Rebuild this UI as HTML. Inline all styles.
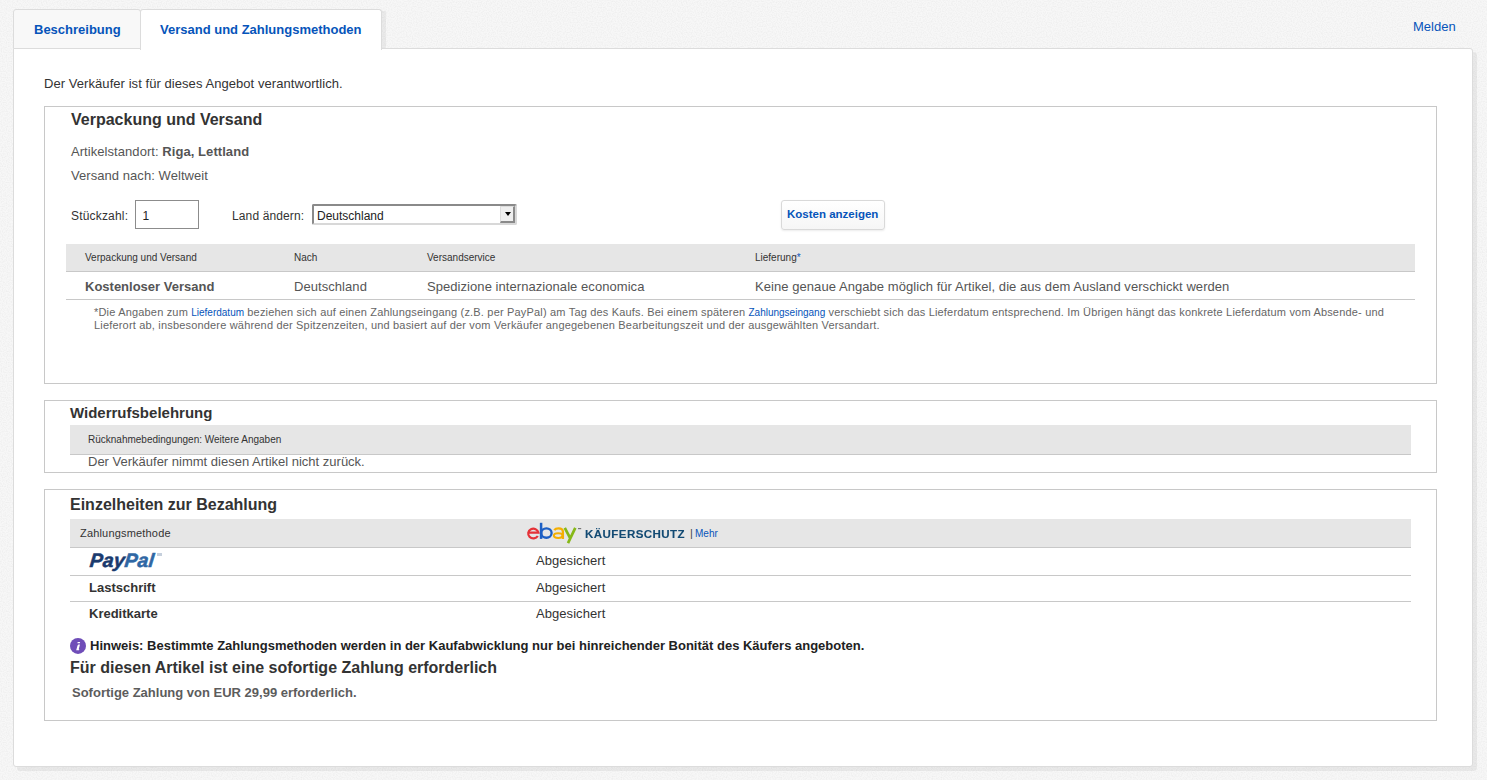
<!DOCTYPE html>
<html><head><meta charset="utf-8">
<style>
*{box-sizing:border-box;margin:0;padding:0}
html,body{width:1487px;height:780px;overflow:hidden}
body{background:#f5f5f5;font-family:"Liberation Sans",sans-serif;color:#333;position:relative}
.abs{position:absolute}
.t{position:absolute;white-space:nowrap;line-height:1}
.tab{position:absolute;top:9px;height:40px;border:1px solid #dcdcdc;border-bottom:none;border-radius:3px 3px 0 0}
.tab1{left:13px;width:128px;background:#f8f8f8;border-bottom:1px solid #dcdcdc;height:40px}
.tab2{left:140px;width:242px;background:#fff;height:41px;z-index:3}
.tablbl{font-weight:bold;font-size:13px;color:#0654ba}
.panel{left:13px;top:48px;width:1460px;height:719px;background:#fff;border:1px solid #dcdcdc;border-radius:0 3px 3px 3px;box-shadow:4px 4px 0 rgba(0,0,0,.055);z-index:2}
.box{position:absolute;left:44px;width:1393px;border:1px solid #c8c8c8;background:#fff;z-index:4}
.h{font-weight:bold;font-size:16px;color:#333}
.s13{font-size:13px;color:#555;letter-spacing:.06px}
.thead{position:absolute;background:#e6e6e6;border-bottom:1px solid #c8c8c8}
.th{font-size:10px;color:#333}
.link{color:#0654ba}
.vd{font-family:"Liberation Sans",sans-serif;font-size:11px;color:#666;letter-spacing:.18px}
.rowline{position:absolute;height:1px;background:#c8c8c8}
</style></head><body>
<svg class="abs" style="left:0;top:0;z-index:0" width="1487" height="780"><filter id="nz" x="0" y="0" width="100%" height="100%"><feTurbulence type="fractalNoise" baseFrequency="0.8" numOctaves="1" seed="3"/><feColorMatrix type="matrix" values="0 0 0 0 0  0 0 0 0 0  0 0 0 0 0  0 0 0 .09 -.035"/></filter><rect width="1487" height="780" fill="#f7f7f7"/><rect width="1487" height="780" filter="url(#nz)"/></svg>
<div class="tab tab1"></div>
<div class="tab tab2"></div>
<div class="abs" style="left:382px;top:11px;width:4px;height:37px;background:rgba(0,0,0,.05);z-index:1"></div>
<div class="t tablbl" style="left:34px;top:23px;z-index:5">Beschreibung</div>
<div class="t tablbl" style="left:160px;top:23px;z-index:5">Versand und Zahlungsmethoden</div>
<div class="t" style="left:1413px;top:20px;font-size:13px;color:#0654ba">Melden</div>
<div class="abs panel"></div>

<div class="t" style="left:44px;top:77px;font-size:13px;color:#333;z-index:5;letter-spacing:.06px">Der Verkäufer ist für dieses Angebot verantwortlich.</div>

<!-- Section 1 -->
<div class="box" style="top:106px;height:278px"></div>
<div style="position:absolute;left:0;top:0;z-index:6">
<div class="t h" style="left:71px;top:112px">Verpackung und Versand</div>
<div class="t s13" style="left:71px;top:145px">Artikelstandort: <b>Riga, Lettland</b></div>
<div class="t s13" style="left:71px;top:169px">Versand nach: Weltweit</div>
<div class="t" style="left:71px;top:210px;font-size:12px;color:#333;letter-spacing:.18px">Stückzahl:</div>
<div class="abs" style="left:135px;top:200px;width:64px;height:29px;border:1px solid #8c8c8c;background:#fff"></div>
<div class="t" style="left:142.5px;top:209.5px;font-size:12px;color:#222">1</div>
<div class="t" style="left:232px;top:210px;font-size:12px;color:#333;letter-spacing:.12px">Land ändern:</div>
<div class="abs" style="left:312px;top:204px;width:205px;height:21px;border-left:2px solid #8a8a8a;border-top:2px solid #8a8a8a;border-right:2px solid #d8d8d8;border-bottom:2px solid #d8d8d8;border-radius:2px;background:#fff"></div>
<div class="t" style="left:317px;top:210px;font-size:12px;color:#222">Deutschland</div>
<div class="abs" style="left:500px;top:206px;width:15px;height:17px;background:#efefef;border-left:1px solid #dcdcdc;border-top:1px solid #dcdcdc;border-right:2px solid #8a8a8a;border-bottom:2px solid #8a8a8a"></div>
<div class="abs" style="left:504.5px;top:212px;width:0;height:0;border-left:3.5px solid transparent;border-right:3.5px solid transparent;border-top:4px solid #000"></div>
<div class="abs" style="left:781px;top:200px;width:104px;height:30px;border:1px solid #d9d9d9;border-radius:3px;background:linear-gradient(#fff,#f6f6f6);box-shadow:0 1px 2px rgba(0,0,0,.08)"></div>
<div class="t" style="left:787px;top:209px;font-size:11.5px;font-weight:bold;color:#0654ba">Kosten anzeigen</div>

<div class="thead" style="left:66px;top:244px;width:1349px;height:28px"></div>
<div class="t th" style="left:85px;top:253px">Verpackung und Versand</div>
<div class="t th" style="left:294px;top:253px">Nach</div>
<div class="t th" style="left:427px;top:253px">Versandservice</div>
<div class="t th" style="left:755px;top:253px">Lieferung<span class="link">*</span></div>
<div class="t" style="left:85px;top:280px;font-size:13px;font-weight:bold;color:#555">Kostenloser Versand</div>
<div class="t s13" style="left:294px;top:280px">Deutschland</div>
<div class="t s13" style="left:427px;top:280px">Spedizione internazionale economica</div>
<div class="t s13" style="left:755px;top:280px">Keine genaue Angabe möglich für Artikel, die aus dem Ausland verschickt werden</div>
<div class="rowline" style="left:66px;top:299px;width:1349px"></div>
<div class="t vd" style="left:94px;top:307px">*Die Angaben zum <span class="link" style="font-size:10px;letter-spacing:0">Lieferdatum</span> beziehen sich auf einen Zahlungseingang (z.B. per PayPal) am Tag des Kaufs. Bei einem späteren <span class="link" style="font-size:10px;letter-spacing:0">Zahlungseingang</span> verschiebt sich das Lieferdatum entsprechend. Im Übrigen hängt das konkrete Lieferdatum vom Absende- und</div>
<div class="t vd" style="left:94px;top:320px">Lieferort ab, insbesondere während der Spitzenzeiten, und basiert auf der vom Verkäufer angegebenen Bearbeitungszeit und der ausgewählten Versandart.</div>
</div>

<!-- Section 2 -->
<div class="box" style="top:400px;height:73px"></div>
<div style="position:absolute;left:0;top:0;z-index:6">
<div class="t" style="left:70px;top:405px;font-size:15px;font-weight:bold;color:#333">Widerrufsbelehrung</div>
<div class="thead" style="left:70px;top:425px;width:1341px;height:30px"></div>
<div class="t th" style="left:88px;top:435px">Rücknahmebedingungen: Weitere Angaben</div>
<div class="t s13" style="left:88px;top:455px;letter-spacing:0">Der Verkäufer nimmt diesen Artikel nicht zurück.</div>
</div>

<!-- Section 3 -->
<div class="box" style="top:489px;height:232px"></div>
<div style="position:absolute;left:0;top:0;z-index:6">
<div class="t h" style="left:70px;top:497px">Einzelheiten zur Bezahlung</div>
<div class="thead" style="left:70px;top:519px;width:1341px;height:29px"></div>
<div class="t vd" style="left:80px;top:528px;color:#333">Zahlungsmethode</div>
<svg class="abs" style="left:520px;top:518px" width="70" height="30" viewBox="520 518 70 30" fill="none">
<path d="M528.3,532.6H538.4A5.15,4.85 0 1 0 537.8,536" stroke="#e53238" stroke-width="2.2"/>
<path d="M541.1,522.8V538.9" stroke="#1d5fc4" stroke-width="2.5"/>
<ellipse cx="546.4" cy="533.05" rx="5.2" ry="4.7" stroke="#1d5fc4" stroke-width="2.3"/>
<path d="M554.3,530.2C555.3,528.6 556.8,528.3 558.6,528.3C561.6,528.3 562.9,529.6 562.9,531.8V538.9" stroke="#f5af02" stroke-width="2.3"/>
<ellipse cx="558.2" cy="535.6" rx="4.3" ry="2.4" stroke="#f5af02" stroke-width="2.1"/>
<path d="M564.8,527.8L570.4,538.6M575.3,527.8L568,543.1" stroke="#86b817" stroke-width="2.7"/>
<rect x="578" y="528" width="3.2" height="1.2" fill="#777"/>
</svg>
<div class="t" style="left:585px;top:529px;font-size:11px;font-weight:bold;color:#124a73;letter-spacing:.4px;transform:scaleX(1.05);transform-origin:0 0;-webkit-text-stroke:.1px #124a73">KÄUFERSCHUTZ</div>
<div class="t" style="left:690px;top:528px;font-size:11px;color:#444">|</div>
<div class="t" style="left:695px;top:529px;font-size:10px;color:#0654ba">Mehr</div>
<div class="t" style="left:89px;top:551px;font-size:19.5px;font-weight:bold;font-style:italic;color:#1a3a6e;-webkit-text-stroke:.5px #1a3a6e;letter-spacing:0px;transform:skewX(-6deg);transform-origin:0 100%">Pay<span style="color:#2f67a4;-webkit-text-stroke:.5px #2f67a4">Pal</span></div>
<div class="abs" style="left:157px;top:553px;width:5px;height:3px;background:#c5cfdc"></div>
<div class="t s13" style="color:#333;left:536px;top:554px">Abgesichert</div>
<div class="rowline" style="left:70px;top:575px;width:1341px"></div>
<div class="t" style="left:89px;top:581px;font-size:13px;font-weight:bold;color:#333">Lastschrift</div>
<div class="t s13" style="color:#333;left:536px;top:581px">Abgesichert</div>
<div class="rowline" style="left:70px;top:601px;width:1341px"></div>
<div class="t" style="left:89px;top:607px;font-size:13px;font-weight:bold;color:#333">Kreditkarte</div>
<div class="t s13" style="color:#333;left:536px;top:607px">Abgesichert</div>
<svg class="abs" style="left:69px;top:637px" width="18" height="18" viewBox="69 637 18 18"><circle cx="78" cy="645.9" r="8" fill="#6f4db8"/><path d="M77.7,642.1H80.1L79.8,643.2H77.4Z" fill="#fff"/><path d="M78.2,644.4H80L78.7,649.2L79.3,649.3L79,650.2H76.2L77.6,645.2H77.9Z" fill="#fff"/></svg>
<div class="t" style="left:90px;top:639px;font-size:13px;font-weight:bold;color:#222">Hinweis: Bestimmte Zahlungsmethoden werden in der Kaufabwicklung nur bei hinreichender Bonität des Käufers angeboten.</div>
<div class="t h" style="left:70px;top:660px">Für diesen Artikel ist eine sofortige Zahlung erforderlich</div>
<div class="t" style="left:72px;top:686px;font-size:13px;font-weight:bold;color:#5c5c5c">Sofortige Zahlung von EUR 29,99 erforderlich.</div>
</div>
</body></html>
